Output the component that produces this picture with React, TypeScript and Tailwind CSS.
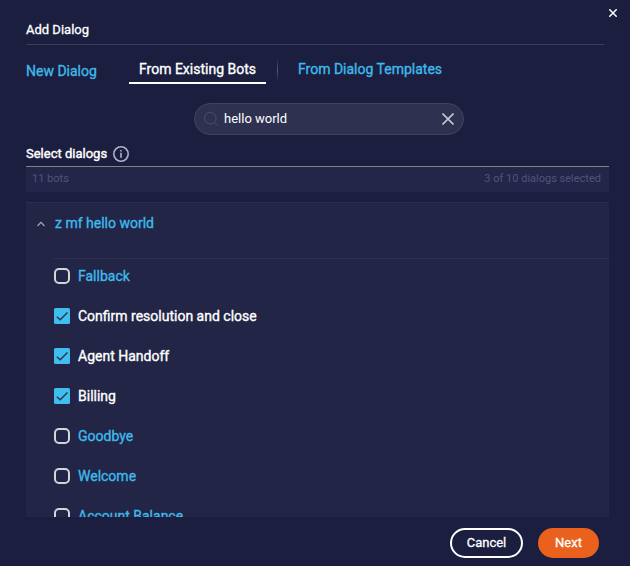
const dialogs = [
  { name: "Fallback", checked: false },
  { name: "Confirm resolution and close", checked: true },
  { name: "Agent Handoff", checked: true },
  { name: "Billing", checked: true },
  { name: "Goodbye", checked: false },
  { name: "Welcome", checked: false },
  { name: "Account Balance", checked: false },
];

function CheckBox({ checked }: { checked: boolean }) {
  if (!checked) {
    return <span className="block size-4 shrink-0 rounded-[5px] border-2 border-[#d4d4da]" />;
  }
  return (
    <span className="block size-4 shrink-0 rounded-[1.5px] bg-[#3fbff0]">
      <svg viewBox="0 0 16 16" className="size-4" fill="none" stroke="#2b3445" strokeWidth="1.4">
        <path d="M2.8 8.7 6.2 11.8 13.5 4.4" />
      </svg>
    </span>
  );
}

export default function App() {
  return (
    <div className="flex h-[566px] w-[630px] flex-col overflow-hidden bg-[#1b1e3e] font-['Roboto',sans-serif] text-white">
      <div className="flex h-5 justify-end pt-[9px] pr-[13px]">
        <svg viewBox="0 0 8 8" className="size-2" stroke="#fff" strokeWidth="1.5">
          <path d="M0.3 0.3 7.7 7.7M7.7 0.3 0.3 7.7" />
        </svg>
      </div>
      <header className="mr-[26px] ml-[26px] h-[25px] border-b border-[#3d3e5b] text-[13px] leading-5 [-webkit-text-stroke:0.3px]">
        Add Dialog
      </header>
      <nav className="ml-[26px] flex h-[39px] items-start text-sm leading-5 text-[#3fb9ea] [-webkit-text-stroke:0.35px]">
        <span className="mt-4 w-[103px]">New Dialog</span>
        <span className="h-[39px] w-[137px] border-b-2 border-white pt-[14px] text-center text-white">From Existing Bots</span>
        <span className="mt-[13px] ml-[11px] h-6 w-px bg-linear-to-b from-transparent via-[#55577a] to-transparent" />
        <span className="mt-[14px] ml-5">From Dialog Templates</span>
      </nav>
      <div className="mt-[19px] ml-[194px] flex h-8 w-[270px] items-center rounded-full border border-[#404360] bg-[#2e3150] pr-[9px] pl-[9px]">
        <svg viewBox="0 0 15 15" className="size-[15px]" fill="none" stroke="#4c4f70" strokeWidth="1">
          <circle cx="6.3" cy="6.2" r="5.8" />
          <path d="m10.5 10.5 3.2 3.2" />
        </svg>
        <span className="ml-[5px] flex-1 text-[13px] leading-5">hello world</span>
        <svg viewBox="0 0 12 12" className="size-3" stroke="#c5c5cb" strokeWidth="1.6">
          <path d="m.5.5 11 11m0-11-11 11" />
        </svg>
      </div>
      <div className="ml-[26px] flex h-[31px] items-center pt-[7px] text-[13px]">
        <span className="-mt-px w-[81px] whitespace-nowrap [-webkit-text-stroke:0.4px]">Select dialogs</span>
        <svg viewBox="0 0 16 16" className="ml-1.5 size-4" fill="none" stroke="#aeb2cc" strokeWidth="1.6">
          <circle cx="8" cy="8" r="7.2" />
          <path d="M8 6.7v5M8 4v1.6" />
        </svg>
      </div>
      <div className="ml-[26px] flex h-[26px] w-[583px] justify-between border-t border-[#85827b] bg-[#232648] pr-2 pl-1.5 text-[11px] leading-[23px] text-[#515479]">
        <span>11 bots</span>
        <span>3 of 10 dialogs selected</span>
      </div>
      <section className="mt-[10px] ml-[26px] h-[315px] w-[583px] shrink-0 overflow-hidden border-t border-[#2b2e50] bg-[#222546] text-sm [-webkit-text-stroke:0.35px]">
        <div className="flex h-[55px] pt-[10px] pl-[11px] leading-5 text-[#3fb9ea]">
          <svg viewBox="0 0 8 6" className="mt-[8px] mr-[10px] h-1.5 w-2" fill="none" stroke="#a7a9b9" strokeWidth="1.1">
            <path d="M.5 5 4 1.3 7.5 5" />
          </svg>
          z mf hello world
        </div>
        <div className="ml-7 flex flex-col gap-5 border-t border-[#2f3152] pt-[7px]">
          {dialogs.map((dialog) => (
            <div key={dialog.name} className={`flex h-5 items-center gap-2 leading-5 ${dialog.checked ? "text-white" : "text-[#3fb9ea]"}`}>
              <CheckBox checked={dialog.checked} />
              <span>{dialog.name}</span>
            </div>
          ))}
        </div>
      </section>
      <footer className="mt-[11px] mr-[31px] flex justify-end gap-[15px] text-[13px] [-webkit-text-stroke:0.3px]">
        <button className="h-[30px] w-[73px] rounded-full border-2 border-white">Cancel</button>
        <button className="h-[30px] w-[61px] rounded-full bg-[#ea611d]">Next</button>
      </footer>
    </div>
  );
}
